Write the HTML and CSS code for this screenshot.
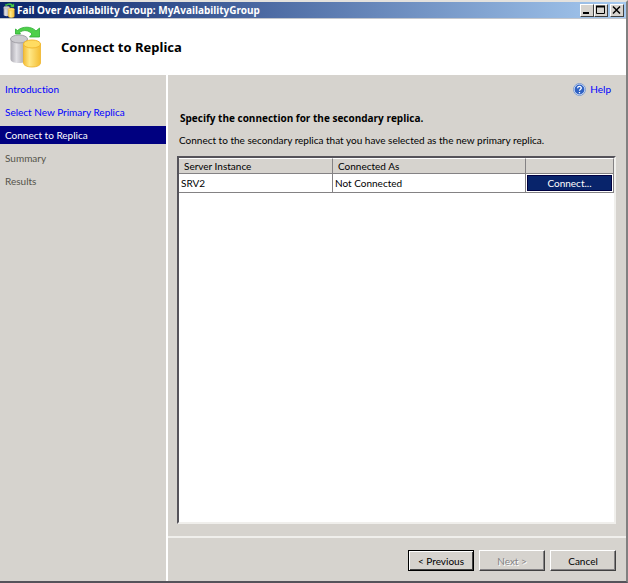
FILE: index.html
```html
<!DOCTYPE html>
<html lang="en">
<head>
    <meta charset="UTF-8">
    <title>Fail Over Availability Group: MyAvailabilityGroup</title>
    <link rel="stylesheet" href="styles.css">
</head>
<body>
    <!-- shared icon: two cylinders and the fail over arrow -->
    <svg class="defs" width="0" height="0" aria-hidden="true">
        <defs>
            <linearGradient id="silver">
                <stop offset="0" stop-color="#aaa8b0"/>
                <stop offset="0.35" stop-color="#e2e1e6"/>
                <stop offset="1" stop-color="#98969d"/>
            </linearGradient>
            <linearGradient id="gold">
                <stop offset="0" stop-color="#f5bd35"/>
                <stop offset="0.35" stop-color="#ffe887"/>
                <stop offset="1" stop-color="#f4bd32"/>
            </linearGradient>
            <symbol id="failover" viewBox="0 0 32 42">
                <path d="M1 13v20c0 3 4 4 8.500 4s8.500-1 8.500-4V13z" fill="url(#silver)"/>
                <ellipse cx="9.500" cy="13" rx="8.500" ry="4" fill="#cccbd0" stroke="#a3a1a8"/>
                <path d="M14 18v19c0 2 3 4 8.500 4s8.500-2 8.500-4V18z" fill="url(#gold)" stroke="#efb52c" stroke-width="0.800"/>
                <ellipse cx="22.500" cy="18" rx="8.500" ry="4" fill="#ffdc62" stroke="#f2b830"/>
                <path d="M6 3v5h5L10 6.500C14 3.500 19 4 22.500 8L20 11H30V2L26.500 5C22 0 13 0 8 4.500z" fill="#4ed04a" stroke="#2bad31" stroke-width="0.800"/>
            </symbol>
        </defs>
    </svg>

    <div class="window">
        <div class="titlebar">
            <svg class="titlebar-icon"><use href="#failover"/></svg>
            <span class="titlebar-text">Fail Over Availability Group: MyAvailabilityGroup</span>
            <div class="titlebar-buttons">
                <button type="button" aria-label="Minimize">
                    <svg viewBox="0 0 11 10"><path d="M2 8h6" stroke="#000" stroke-width="2"/></svg>
                </button>
                <button type="button" aria-label="Maximize">
                    <svg viewBox="0 0 11 10"><path d="M1.500 1v7.500h8V1" fill="none" stroke="#000"/><path d="M1 1.500h9" stroke="#000" stroke-width="2"/></svg>
                </button>
                <button type="button" class="close" aria-label="Close">
                    <svg viewBox="0 0 11 10"><path d="M2 1.500l7 7M9 1.500l-7 7" stroke="#000" stroke-width="1.500"/></svg>
                </button>
            </div>
        </div>

        <header class="header">
            <svg class="header-icon"><use href="#failover"/></svg>
            <h1>Connect to Replica</h1>
        </header>

        <div class="body">
            <nav class="steps">
                <a href="#">Introduction</a>
                <a href="#">Select New Primary Replica</a>
                <a href="#" class="current" aria-current="step">Connect to Replica</a>
                <span>Summary</span>
                <span>Results</span>
            </nav>

            <div class="main">
                <div class="page">
                    <div class="help">
                        <svg viewBox="0 0 13 13">
                            <circle cx="6.500" cy="6.500" r="6" fill="#e8eefa" stroke="#7c9bd0"/>
                            <circle cx="6.500" cy="6.500" r="4.900" fill="#2f62c4"/>
                            <path d="M4.600 5.200C4.700 2.800 8.500 3 8.300 5.100 8.200 6.300 6.600 6.200 6.500 7.800M6.500 8.900v1.300" fill="none" stroke="#fff" stroke-width="1.300"/>
                        </svg>
                        <a href="#">Help</a>
                    </div>
                    <h2>Specify the connection for the secondary replica.</h2>
                    <p>Connect to the secondary replica that you have selected as the new primary replica.</p>
                    <div class="grid">
                        <table>
                            <thead>
                                <tr>
                                    <th class="col-server">Server Instance</th>
                                    <th class="col-user">Connected As</th>
                                    <th class="col-action"></th>
                                </tr>
                            </thead>
                            <tbody>
                                <tr>
                                    <td>SRV2</td>
                                    <td>Not Connected</td>
                                    <td class="action"><button type="button">Connect...</button></td>
                                </tr>
                            </tbody>
                        </table>
                    </div>
                </div>

                <footer class="footer">
                    <button type="button" class="default">&lt; Previous</button>
                    <button type="button" disabled>Next &gt;</button>
                    <button type="button">Cancel</button>
                </footer>
            </div>
        </div>
    </div>
</body>
</html>
```

FILE: styles.css
```css
* {
    box-sizing: border-box;
}

body {
    margin: 0;
    background: #d6d3ce;
    color: #000;
    font-family: Lato, "Liberation Sans", sans-serif;
    font-size: 10px;
    font-variant-ligatures: none;
    line-height: 14px;
}

button {
    font: inherit;
    color: #000;
    background: #d6d3ce;
    padding: 0;
}

a {
    color: #00f;
    text-decoration: none;
}

.defs {
    position: absolute;
}

.window {
    display: flex;
    flex-direction: column;
    min-height: 100vh;
    border-top: 2px solid #e4e2de;
    border-right: 2px solid #808080;
    border-bottom: 2px solid #55535a;
}

/* title bar */
.titlebar {
    display: flex;
    align-items: center;
    height: 17px;
    padding: 0 2px;
    background: linear-gradient(to right, #0a246a, #a6caf0);
    border-bottom: 1px solid #c3c6cc;
    color: #fff;
    font-family: "Noto Sans", sans-serif;
    font-weight: bold;
}

.titlebar-icon {
    width: 14px;
    height: 15px;
    margin-right: 1px;
}

.titlebar-text {
    flex: 1;
}

.titlebar-buttons {
    display: flex;
}

    .titlebar-buttons button {
        width: 14px;
        height: 13px;
        border: 1px solid;
        border-color: #fff #404040 #404040 #fff;
    }

    .titlebar-buttons svg {
        display: block;
        width: 11px;
        height: 10px;
    }

    .titlebar-buttons .close {
        margin-left: 2px;
    }

/* header */
.header {
    display: flex;
    align-items: center;
    height: 56px;
    padding: 0 9px;
    background: #fff;
}

.header-icon {
    width: 33px;
    height: 42px;
    margin-right: 19px;
}

h1 {
    margin: 0;
    font-family: "Noto Sans", sans-serif;
    font-size: 13px;
    line-height: 18px;
}

.body {
    display: flex;
    flex: 1;
}

/* steps on the left */
.steps {
    display: flex;
    flex-direction: column;
    gap: 5px;
    width: 168px;
    padding-top: 5px;
    border-right: 2px solid #fff;
}

    .steps a,
    .steps span {
        padding: 0 5px;
        line-height: 18px;
    }

    .steps span {
        color: #55534a;
    }

    .steps .current {
        background: #000080;
        color: #fff;
    }

.main {
    display: flex;
    flex: 1;
    flex-direction: column;
}

.page {
    display: flex;
    flex: 1;
    flex-direction: column;
    padding: 7px 10px 12px 9px;
}

.help {
    display: flex;
    justify-content: flex-end;
    align-items: center;
    gap: 4px;
    padding-right: 5px;
}

    .help svg {
        width: 13px;
        height: 13px;
    }

h2 {
    margin: 14px 3px 0;
    font-family: "Open Sans", "Noto Sans", sans-serif;
    font-size: 10px;
    line-height: 16px;
}

p {
    margin: 7px 2px 9px;
}

/* replica list */
.grid {
    flex: 1;
    background: #fff;
    border: 2px solid;
    border-color: #55535a #f0efec #f0efec #55535a;
}

table {
    width: 100%;
    table-layout: fixed;
    border-collapse: separate;
    border-spacing: 0;
}

th, td {
    padding: 0 2px;
    border-right: 1px solid #848284;
    border-bottom: 1px solid #848284;
    text-align: left;
    font-weight: normal;
}

th {
    height: 16px;
    padding-left: 5px;
    background: #d6d3ce;
    border-top: 1px solid #fff;
    line-height: 14px;
}

td {
    height: 19px;
}

.col-server {
    width: 154px;
}

.col-action {
    width: 88px;
}

.action {
    padding: 1px;
}

    .action button {
        display: block;
        width: 100%;
        height: 16px;
        background: #08246b;
        color: #fff;
        border: 1px solid #000040;
    }

/* wizard buttons */
.footer {
    display: flex;
    justify-content: flex-end;
    gap: 5px;
    padding: 12px 10px 10px;
    border-top: 2px solid #f0efec;
}

    .footer button {
        width: 66px;
        height: 21px;
        border: 1px solid;
        border-color: #fff #404040 #404040 #fff;
        box-shadow: inset -1px -1px #848284;
    }

    .footer button:disabled {
        color: #848284;
        text-shadow: 1px 1px #fff;
    }

    .footer .default {
        border-color: #000;
        box-shadow: inset 1px 1px #fff, inset -1px -1px #404040;
    }
```
